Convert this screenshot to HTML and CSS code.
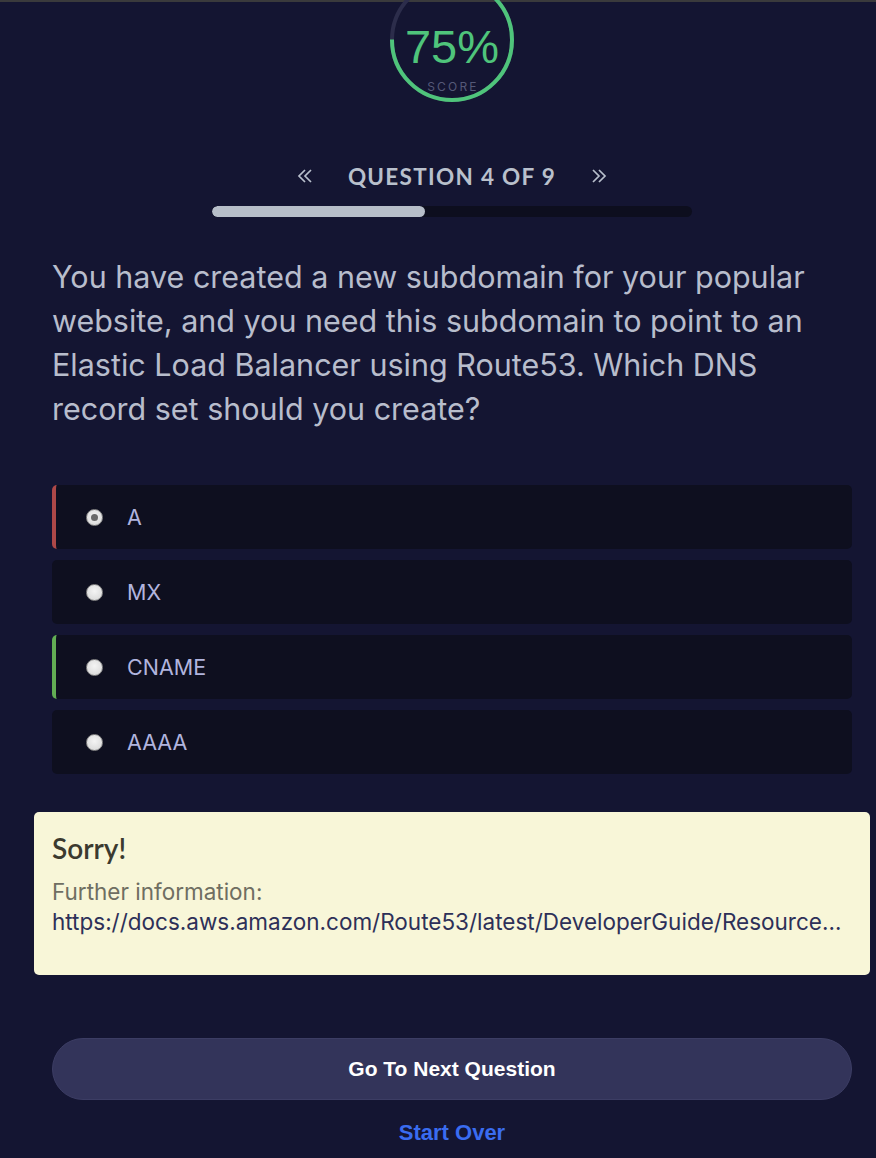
FILE: index.html
```html
<!DOCTYPE html>
<html lang="en">
<head>
<meta charset="utf-8">
<title>Quiz</title>
<link rel="stylesheet" href="styles.css">
</head>
<body>
<div class="topline"></div>
<main class="page">
  <section class="score">
    <svg class="ring" width="124" height="124" viewBox="0 0 124 124">
      <circle cx="62" cy="62" r="60" fill="none" stroke="#2c2d4b" stroke-width="4"/>
      <circle cx="62" cy="62" r="60" fill="none" stroke="#4fc47b" stroke-width="4"
        stroke-dasharray="282.74 376.99" transform="rotate(-90 62 62)"/>
    </svg>
    <div class="score-text">
      <div class="pct">75%</div>
      <div class="lbl">SCORE</div>
    </div>
  </section>

  <nav class="qnav">
    <svg class="chev" width="16" height="16" viewBox="0 0 16 16"><path d="M8 2 L2 8 L8 14 M14 2 L8 8 L14 14" fill="none" stroke="#b8bfcc" stroke-width="1.7"/></svg>
    <span class="qtitle">QUESTION 4 OF 9</span>
    <svg class="chev" width="16" height="16" viewBox="0 0 16 16"><path d="M2 2 L8 8 L2 14 M8 2 L14 8 L8 14" fill="none" stroke="#b8bfcc" stroke-width="1.7"/></svg>
  </nav>

  <div class="progress"><div class="fill" style="width:44.44%"></div></div>

  <div class="inner">
    <p class="question">You have created a new subdomain for your popular website, and you need this subdomain to point to an Elastic Load Balancer using Route53. Which DNS record set should you create?</p>

    <ul class="answers">
      <li class="answer wrong"><span class="radio checked"></span><span class="label">A</span></li>
      <li class="answer"><span class="radio"></span><span class="label">MX</span></li>
      <li class="answer right"><span class="radio"></span><span class="label">CNAME</span></li>
      <li class="answer"><span class="radio"></span><span class="label">AAAA</span></li>
    </ul>
  </div>

  <div class="feedback">
    <h2 class="sorry">Sorry!</h2>
    <div class="further">Further information:</div>
    <div class="link">https://docs.aws.amazon.com/Route53/latest/DeveloperGuide/Resource…</div>
  </div>

  <div class="inner">
    <button class="next">Go To Next Question</button>
    <div class="restart">Start Over</div>
  </div>
</main>
</body>
</html>
```

FILE: styles.css
```css
html, body {
  margin: 0;
  padding: 0;
  background: #141532;
  height: 100%;
  overflow: hidden;
}
body {
  font-family: Inter, "Liberation Sans", sans-serif;
}
.topline {
  height: 2px;
  background: #3a3a3c;
}
.page {
  width: 836px;
  margin-left: 34px;
}
.inner {
  padding: 0 18px;
}
.score {
  position: relative;
  width: 124px;
  height: 124px;
  margin: -24px auto 0;
}
.ring {
  display: block;
}
.score-text {
  position: absolute;
  left: 0;
  right: 0;
  top: 0;
  height: 124px;
  text-align: center;
}
.pct {
  color: #4fc47b;
  font-family: "Liberation Sans", sans-serif;
  font-size: 47px;
  line-height: 47px;
  padding-top: 45px;
}
.lbl {
  color: #555978;
  font-size: 12px;
  letter-spacing: 2.2px;
  line-height: 12px;
  margin-top: 11px;
  padding-left: 2px;
}
.qnav {
  margin-top: 59px;
  height: 30px;
  display: flex;
  align-items: center;
  justify-content: center;
  gap: 35px;
}
.qtitle {
  color: #b9c0cc;
  font-family: Lato, sans-serif;
  font-weight: 700;
  font-size: 22.5px;
  letter-spacing: 1.3px;
}
.chev {
  display: block;
}
.progress {
  width: 480px;
  height: 11px;
  margin: 15px auto 0;
  background: #0d0e1e;
  border-radius: 6px;
  overflow: hidden;
}
.fill {
  height: 100%;
  background: #b7bec9;
  border-radius: 6px;
}
.question {
  margin: 38px 0 0;
  color: #b8bdcc;
  font-size: 30.5px;
  line-height: 44px;
}
.answers {
  list-style: none;
  margin: 54px 0 0;
  padding: 0;
  display: flex;
  flex-direction: column;
  gap: 11px;
}
.answer {
  height: 64px;
  background: #0e0f1f;
  border-radius: 5px;
  display: flex;
  align-items: center;
  padding-left: 34px;
  box-sizing: border-box;
}
.answer.wrong {
  border-left: 4px solid #ad4848;
  padding-left: 30px;
}
.answer.right {
  border-left: 4px solid #62ad54;
  padding-left: 30px;
}
.radio {
  width: 15px;
  height: 15px;
  border-radius: 50%;
  border: 1px solid #8a8a8a;
  background: radial-gradient(circle at 50% 40%, #f4f4f4 0%, #dedede 70%, #c8c8c8 100%);
  margin-right: 24px;
  display: flex;
  align-items: center;
  justify-content: center;
}
.radio.checked::after {
  content: "";
  width: 7px;
  height: 7px;
  border-radius: 50%;
  background: #6a6a6a;
}
.label {
  color: #b1b4de;
  font-size: 21.5px;
}
.feedback {
  margin-top: 38px;
  background: #f8f6d8;
  border-radius: 5px;
  padding: 21px 18px 38px;
}
.sorry {
  margin: 0 0 14px;
  color: #3b3a2f;
  font-family: Lato, sans-serif;
  font-weight: 600;
  font-size: 28px;
  line-height: 30px;
}
.further {
  color: #6f6e62;
  font-size: 22.5px;
  line-height: 30px;
}
.link {
  color: #2d3058;
  font-size: 22.5px;
  line-height: 30px;
  white-space: nowrap;
}
.next {
  display: block;
  width: 100%;
  height: 62px;
  margin-top: 63px;
  border-radius: 31px;
  border: 1px solid #3c3d64;
  background: #33345a;
  color: #ffffff;
  font-family: "Liberation Sans", sans-serif;
  font-weight: 700;
  font-size: 21px;
}
.restart {
  margin-top: 21px;
  text-align: center;
  color: #3a6cf0;
  font-family: "Liberation Sans", sans-serif;
  font-weight: 700;
  font-size: 22px;
  line-height: 24px;
}
```
